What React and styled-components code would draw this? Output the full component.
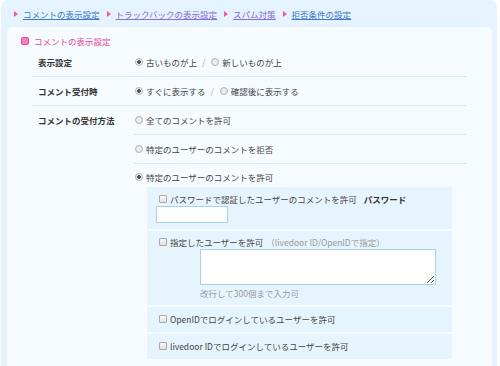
import styled, { createGlobalStyle } from "styled-components";

const GlobalStyle = createGlobalStyle`
    html, body {
        margin: 0;
        padding: 0;
        background: #ffffff;
    }
    body {
        font-family: "Noto Sans CJK JP", "Noto Sans", sans-serif;
        font-size: 8.5px;
        line-height: 12px;
        color: #444;
    }
`;

const Frame = styled.div`
    margin: 0 3px 0 1px;
    height: 366px;
    box-sizing: border-box;
    padding: 0 5px 0 6px;
    background: #e4f3fd;
    border-radius: 7px 7px 0 0;
    overflow: hidden;
`;

const Nav = styled.nav`
    height: 27px;
    display: flex;
    align-items: center;
    gap: 7px;
    padding: 1px 0 0 7px;
    box-sizing: border-box;
`;

const NavLink = styled.a`
    display: flex;
    align-items: center;
    gap: 5px;
    color: ${props => props.visited ? "#8a6bd4" : "#3b78c9"};
    text-decoration: underline;
    cursor: pointer;

    &::before {
        content: "";
        border-left: 4px solid #f05a9e;
        border-top: 3px solid transparent;
        border-bottom: 3px solid transparent;
    }
`;

const Panel = styled.section`
    background: #f5fbff;
    border-radius: 5px 5px 0 0;
    padding: 9px 0 0 25px;
    height: 100%;
`;

const Heading = styled.h2`
    margin: 0 0 0 -11px;
    display: flex;
    align-items: center;
    gap: 5px;
    font-size: 8.5px;
    font-weight: normal;
    color: #e8459a;
    height: 10px;

    &::before {
        content: "";
        width: 6px;
        height: 6px;
        border-radius: 2px;
        background: #f384b8;
        border: 0.5px solid #e8459a;
    }
`;

const Table = styled.div`
    width: 435px;
    margin-top: 2px;
`;

const Row = styled.div`
    display: grid;
    grid-template-columns: 101px 1fr;
    border-bottom: 1.5px solid #d4eaf6;
`;

const Label = styled.div`
    font-weight: bold;
    color: #333;
    padding: ${props => props.top ? "8px 0 0 6px" : "0 0 0 6px"};
    height: ${props => props.top ? "auto" : "28px"};
    display: flex;
    align-items: ${props => props.top ? "flex-start" : "center"};
`;

const Value = styled.div`
    display: flex;
    flex-direction: column;
`;

const Line = styled.div`
    height: ${props => props.short ? "16px" : "28px"};
    box-sizing: content-box;
    display: flex;
    align-items: ${props => props.short ? "flex-start" : "center"};
    padding: ${props => props.short ? "7px 0 0 2px" : "0 0 0 2px"};
    border-bottom: ${props => props.divided ? "1.5px solid #d4eaf6" : "none"};
`;

const Option = styled.label`
    display: flex;
    align-items: center;
    gap: 3px;
    color: #444;
    line-height: 12px;
`;

const Radio = styled.span`
    width: 6px;
    height: 6px;
    border-radius: 50%;
    border: 1px solid #b4b4b4;
    background: radial-gradient(circle, ${props => props.checked ? "#555 0 1.6px, #eee 1.8px" : "#f4f4f4 0, #e4e4e4 3px"});
`;

const Check = styled.span`
    width: 6px;
    height: 6px;
    border-radius: 1px;
    border: 1px solid #a8a8a8;
    background: linear-gradient(#f8f8f8, #e2e2e2);
    flex-shrink: 0;
`;

const Slash = styled.span`
    color: #aaa;
    margin: 0 6px 0 5px;
`;

const SubList = styled.div`
    display: flex;
    flex-direction: column;
    gap: 2px;
    margin: 0 15px 7px 14px;
`;

const SubBox = styled.div`
    background: #e6f5fd;
    padding: ${props => props.pad || "6px 10px 7px 12px"};
    display: flex;
    flex-direction: column;
`;

const Bold = styled.span`
    font-weight: bold;
    color: #333;
    margin-left: 4px;
`;

const Muted = styled.span`
    color: #999;
`;

const TextInput = styled.input`
    display: block;
    width: 72px;
    height: 17px;
    box-sizing: border-box;
    margin: 1px 0 0 -3px;
    border: 1px solid #a9d0ea;
    background: #fff;
    padding: 0;
`;

const TextArea = styled.textarea`
    display: block;
    width: 236px;
    height: 36px;
    box-sizing: border-box;
    margin: 1px 0 0 41px;
    border: 1px solid #a9d0ea;
    background: #fff;
    resize: both;
    padding: 0;
`;

const Note = styled.div`
    color: #999;
    margin: 2px 0 0 41px;
    height: 12px;
    line-height: 12px;
`;

export default function App() {
    return (
        <>
            <GlobalStyle />
            <Frame>
                <Nav>
                    <NavLink>コメントの表示設定</NavLink>
                    <NavLink visited>トラックバックの表示設定</NavLink>
                    <NavLink visited>スパム対策</NavLink>
                    <NavLink>拒否条件の設定</NavLink>
                </Nav>
                <Panel>
                    <Heading>コメントの表示設定</Heading>
                    <Table>
                        <Row>
                            <Label>表示設定</Label>
                            <Line>
                                <Option><Radio checked />古いものが上</Option>
                                <Slash>/</Slash>
                                <Option><Radio />新しいものが上</Option>
                            </Line>
                        </Row>
                        <Row>
                            <Label>コメント受付時</Label>
                            <Line>
                                <Option><Radio checked />すぐに表示する</Option>
                                <Slash>/</Slash>
                                <Option><Radio />確認後に表示する</Option>
                            </Line>
                        </Row>
                        <Row>
                            <Label top>コメントの受付方法</Label>
                            <Value>
                                <Line divided>
                                    <Option><Radio />全てのコメントを許可</Option>
                                </Line>
                                <Line divided>
                                    <Option><Radio />特定のユーザーのコメントを拒否</Option>
                                </Line>
                                <Line short>
                                    <Option><Radio checked />特定のユーザーのコメントを許可</Option>
                                </Line>
                                <SubList>
                                    <SubBox pad="6px 10px 6px 12px">
                                        <Option><Check />パスワードで認証したユーザーのコメントを許可<Bold>パスワード</Bold></Option>
                                        <TextInput type="text" />
                                    </SubBox>
                                    <SubBox pad="5px 10px 6px 12px">
                                        <Option><Check />指定したユーザーを許可<Muted>（livedoor ID/OpenIDで指定）</Muted></Option>
                                        <TextArea />
                                        <Note>改行して300個まで入力可</Note>
                                    </SubBox>
                                    <SubBox>
                                        <Option><Check />OpenIDでログインしているユーザーを許可</Option>
                                    </SubBox>
                                    <SubBox>
                                        <Option><Check />livedoor IDでログインしているユーザーを許可</Option>
                                    </SubBox>
                                </SubList>
                            </Value>
                        </Row>
                    </Table>
                </Panel>
            </Frame>
        </>
    );
}
